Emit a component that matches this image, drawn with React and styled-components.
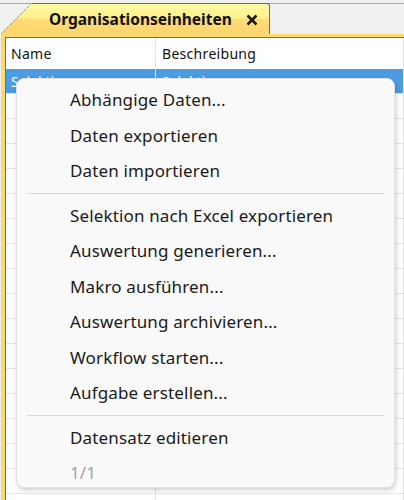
import React from "react";
import styled, { createGlobalStyle } from "styled-components";

const GlobalStyle = createGlobalStyle`
  html, body {
    margin: 0;
    padding: 0;
    background: #f0f0f0;
  }
  body {
    font-family: "Noto Sans", "Open Sans", sans-serif;
  }
`;

const rows = Array.from({ length: 18 }, (_, i) => i);

const menuGroups = [
  ["Abhängige Daten...", "Daten exportieren", "Daten importieren"],
  [
    "Selektion nach Excel exportieren",
    "Auswertung generieren...",
    "Makro ausführen...",
    "Auswertung archivieren...",
    "Workflow starten...",
    "Aufgabe erstellen...",
  ],
  ["Datensatz editieren"],
];

const TabCorner = () => (
  <svg width="31" height="31" viewBox="0 0 31 31">
    <defs>
      <linearGradient id="tabFill" x1="0" y1="0" x2="0" y2="1">
        <stop offset="0" stopColor="#fff9a6" />
        <stop offset="0.48" stopColor="#fff08a" />
        <stop offset="0.52" stopColor="#ffdc78" />
        <stop offset="1" stopColor="#ffd46c" />
      </linearGradient>
    </defs>
    <polygon points="0,31 31,0 31,31" fill="url(#tabFill)" />
    <line
      x1="0.5"
      y1="30.5"
      x2="30.5"
      y2="0.5"
      stroke="#6a6a6a"
      strokeWidth="1"
      strokeDasharray="1 1"
    />
  </svg>
);

const CloseIcon = () => (
  <svg width="12" height="12" viewBox="0 0 12 12">
    <path
      d="M1.5 1.5 L10.5 10.5 M10.5 1.5 L1.5 10.5"
      stroke="#1a1a1a"
      strokeWidth="2.6"
      strokeLinecap="butt"
    />
  </svg>
);

const App = () => {
  return (
    <>
      <GlobalStyle />
      <Window>
        <TabStrip>
          <Tab>
            <TabCorner />
            <TabBody>
              <TabTitle>Organisationseinheiten</TabTitle>
              <CloseButton>
                <CloseIcon />
              </CloseButton>
            </TabBody>
          </Tab>
        </TabStrip>
        <Panel>
          <Grid>
            <HeaderRow>
              <Cell $first>Name</Cell>
              <Cell>Beschreibung</Cell>
              <Cell />
            </HeaderRow>
            {rows.map((r) => (
              <Row key={r} $selected={r === 0}>
                <Cell $first>{r === 0 ? "Selektion" : ""}</Cell>
                <Cell>{r === 0 ? "Selektion" : ""}</Cell>
                <Cell />
              </Row>
            ))}
          </Grid>
        </Panel>

        <Menu>
          {menuGroups.map((group, gi) => (
            <React.Fragment key={gi}>
              {gi > 0 && <Separator />}
              {group.map((label) => (
                <MenuItem key={label}>{label}</MenuItem>
              ))}
            </React.Fragment>
          ))}
          <MenuItem $disabled>1/1</MenuItem>
        </Menu>
      </Window>
    </>
  );
};

export default App;

const Window = styled.div`
  position: relative;
  width: 404px;
  height: 500px;
  overflow: hidden;
  background: #f0f0f0;
  display: flex;
  flex-direction: column;
`;

const TabStrip = styled.div`
  margin-top: 3px;
  height: 31px;
  border-top: 1px solid #a9a9a9;
  padding-left: 1px;
  display: flex;
  align-items: flex-end;
  flex-shrink: 0;
  box-sizing: border-box;
`;

const Tab = styled.div`
  display: flex;
  align-items: flex-end;
  height: 31px;
  margin-top: -1px;
`;

const TabBody = styled.div`
  height: 31px;
  box-sizing: border-box;
  width: 238px;
  display: flex;
  align-items: center;
  padding-left: 17px;
  border-top: 1px solid #6a6a6a;
  border-right: 1px solid #6a6a6a;
  border-top-right-radius: 3px;
  background: linear-gradient(
    to bottom,
    #fff9a6 0%,
    #fff08a 48%,
    #ffdc78 52%,
    #ffd46c 100%
  );
`;

const TabTitle = styled.span`
  font-family: "Noto Sans", sans-serif;
  font-weight: 700;
  font-size: 15.5px;
  color: #111;
`;

const CloseButton = styled.span`
  display: flex;
  align-items: center;
  margin-left: 14px;
  margin-top: 2px;
`;

const Panel = styled.div`
  flex: 1;
  display: flex;
  border-top: 3px solid #ffd870;
  border-left: 4px solid #ffd870;
  box-shadow: inset 1px 1px 0 #6e6e6e;
  margin-left: 1px;
  padding: 1px 0 0 1px;
  background: #ffffff;
`;

const Grid = styled.div`
  flex: 1;
  display: flex;
  flex-direction: column;
  background: #ffffff;
`;

const HeaderRow = styled.div`
  display: grid;
  grid-template-columns: 150px 248px 1fr;
  height: 31px;
  flex-shrink: 0;
  font-family: "Noto Sans", sans-serif;
  font-size: 14px;
  letter-spacing: 0.3px;
  color: #111;
  align-items: stretch;
`;

const Row = styled.div`
  display: grid;
  grid-template-columns: 150px 248px 1fr;
  height: 25px;
  flex-shrink: 0;
  box-sizing: border-box;
  border-bottom: 1px solid #e6e6e6;
  background: ${(p) => (p.$selected ? "#4c9be3" : "#ffffff")};
  color: ${(p) => (p.$selected ? "#ffffff" : "#111")};
  font-family: "Noto Sans", sans-serif;
  font-size: 14px;
`;

const Cell = styled.div`
  display: flex;
  align-items: center;
  padding-left: ${(p) => (p.$first ? "5px" : "6px")};
  border-right: 1px solid #e3e3e3;
  white-space: nowrap;
  overflow: hidden;
`;

const Menu = styled.div`
  position: absolute;
  left: 16px;
  top: 78px;
  width: 379px;
  height: 410px;
  box-sizing: border-box;
  padding: 3px 0 1px;
  background: #f9f9f9;
  border: 1px solid #e2e2e2;
  border-radius: 8px;
  box-shadow: 1px 2px 5px rgba(0, 0, 0, 0.2);
  display: flex;
  flex-direction: column;
`;

const MenuItem = styled.div`
  height: 35.5px;
  flex-shrink: 0;
  display: flex;
  align-items: center;
  padding-left: 53px;
  font-family: "Noto Sans", sans-serif;
  font-size: 17px;
  letter-spacing: 0.15px;
  color: ${(p) => (p.$disabled ? "#a2a2a2" : "#1a1a1a")};
`;

const Separator = styled.div`
  height: 1px;
  flex-shrink: 0;
  margin: 4px 10px 4px 10px;
  background: #d8d8d8;
`;
